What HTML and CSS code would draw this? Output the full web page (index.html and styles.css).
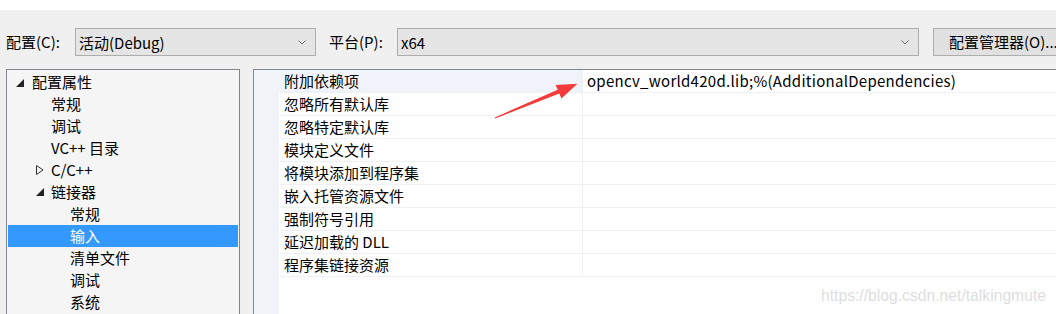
FILE: index.html
```html
<!DOCTYPE html>
<html lang="zh-CN">
<head>
    <meta charset="UTF-8">
    <title>属性页</title>
    <link rel="stylesheet" href="styles.css">
</head>
<body>
    <div class="dialog">
        <div class="toolbar">
            <span class="lbl lbl-config">配置(C):</span>
            <div class="combo combo-config">
                <span>活动(Debug)</span>
                <svg class="chev" width="8" height="5" viewBox="0 0 8 5"><path d="M0.5 0.5 L4 4 L7.5 0.5" fill="none" stroke="#6d6d6d" stroke-width="1"/></svg>
            </div>
            <span class="lbl lbl-plat">平台(P):</span>
            <div class="combo combo-plat">
                <span>x64</span>
                <svg class="chev" width="8" height="5" viewBox="0 0 8 5"><path d="M0.5 0.5 L4 4 L7.5 0.5" fill="none" stroke="#6d6d6d" stroke-width="1"/></svg>
            </div>
            <div class="btn">配置管理器(O)...</div>
        </div>

        <div class="panes">
            <div class="tree">
                <div class="node l1"><svg class="tri" width="8" height="8" viewBox="0 0 8 8"><path d="M8 0 L8 8 L0 8 Z" fill="#222"/></svg>配置属性</div>
                <div class="node l2">常规</div>
                <div class="node l2">调试</div>
                <div class="node l2">VC++ 目录</div>
                <div class="node l2 has-tri"><svg class="tri" width="8" height="10" viewBox="0 0 8 10"><path d="M0.5 0.5 L7 5 L0.5 9.5 Z" fill="none" stroke="#333" stroke-width="1"/></svg>C/C++</div>
                <div class="node l2 has-tri"><svg class="tri" width="8" height="8" viewBox="0 0 8 8"><path d="M8 0 L8 8 L0 8 Z" fill="#222"/></svg>链接器</div>
                <div class="node l3">常规</div>
                <div class="node l3 selected">输入</div>
                <div class="node l3">清单文件</div>
                <div class="node l3">调试</div>
                <div class="node l3">系统</div>
            </div>

            <div class="grid">
                <div class="gutter"></div>
                <div class="rows">
                    <div class="row active"><div class="name">附加依赖项</div><div class="value">opencv_world420d.lib;%(AdditionalDependencies)</div></div>
                    <div class="row"><div class="name">忽略所有默认库</div><div class="value"></div></div>
                    <div class="row"><div class="name">忽略特定默认库</div><div class="value"></div></div>
                    <div class="row"><div class="name">模块定义文件</div><div class="value"></div></div>
                    <div class="row"><div class="name">将模块添加到程序集</div><div class="value"></div></div>
                    <div class="row"><div class="name">嵌入托管资源文件</div><div class="value"></div></div>
                    <div class="row"><div class="name">强制符号引用</div><div class="value"></div></div>
                    <div class="row"><div class="name">延迟加载的 DLL</div><div class="value"></div></div>
                    <div class="row"><div class="name">程序集链接资源</div><div class="value"></div></div>
                </div>
            </div>
        </div>
    </div>

    <svg class="arrow" width="1056" height="314" viewBox="0 0 1056 314">
        <polygon points="495.2,118.6 559.3,93.6 561.4,98.4 577.5,83.8 555.6,85 557.7,89.8 494.8,117.4" fill="#f23c3c"/>
    </svg>
    <div class="watermark">https://blog.csdn.net/talkingmute</div>
</body>
</html>
```

FILE: styles.css
```css
body{
    margin: 0;
    width: 1056px;
    height: 314px;
    overflow: hidden;
    background: #fff;
    position: relative;
    font-family: "Noto Sans CJK SC", sans-serif;
    font-size: 15px;
    color: #000;
}

.dialog{
    margin-top: 10px;
    height: 304px;
    background: #f0f0f0;
    overflow: hidden;
}

/* 상단 콤보 영역 */
.toolbar{
    display: flex;
    align-items: center;
    padding-top: 18px;
    height: 28px;
    white-space: nowrap;
}
.toolbar > *{
    flex-shrink: 0;
}
.lbl{
    line-height: 28px;
    box-sizing: border-box;
}
.lbl-config{
    width: 75px;
    padding-left: 6px;
}
.lbl-plat{
    width: 68px;
    margin-left: 13px;
}
.combo{
    box-sizing: border-box;
    height: 28px;
    border: 1px solid #adadad;
    background: #e5e5e5;
    display: flex;
    align-items: center;
    justify-content: space-between;
    padding: 0 9px 0 3px;
}
.combo-config{
    width: 241px;
}
.combo-plat{
    width: 522px;
}
.chev{
    display: block;
}
.btn{
    box-sizing: border-box;
    height: 28px;
    width: 132px;
    margin-left: 14px;
    border: 1px solid #adadad;
    background: #e1e1e1;
    line-height: 26px;
    padding-left: 15px;
}

.panes{
    display: flex;
    margin-top: 13px;
    height: 245px;
}
.panes > div{
    flex-shrink: 0;
}

/* 트리 */
.tree{
    box-sizing: border-box;
    width: 234px;
    margin-left: 6px;
    height: 260px;
    border: 1px solid #828790;
    background: #f5f5f5;
    padding: 1px;
}
.node{
    height: 22px;
    line-height: 22px;
    display: flex;
    align-items: center;
    white-space: nowrap;
}
.node.l1{
    padding-left: 8px;
}
.node.l1 .tri{
    margin-right: 8px;
    margin-top: 2px;
}
.node.l2{
    padding-left: 43px;
}
.node.l2.has-tri{
    padding-left: 28px;
}
.node.has-tri .tri{
    margin-right: 7px;
}
.node.l3{
    padding-left: 62px;
}
.node.selected{
    background: #3399ff;
    color: #fff;
}

/* 속성 그리드 */
.grid{
    box-sizing: border-box;
    width: 820px;
    margin-left: 13px;
    height: 260px;
    border: 1px solid #828790;
    border-right: none;
    background: #fff;
    display: flex;
}
.gutter{
    width: 25px;
    background: #f0f4f9;
}
.rows{
    flex: 1;
}
.row{
    display: flex;
    height: 22px;
    border-bottom: 1px solid #eef0f4;
}
.row .name{
    width: 298px;
    padding-left: 5px;
    line-height: 22px;
    border-right: 1px solid #eef0f4;
    white-space: nowrap;
}
.row .value{
    flex: 1;
    padding-left: 4px;
    line-height: 22px;
    letter-spacing: 0.28px;
    white-space: nowrap;
}
.row.active .name{
    background: #f0f4fa;
}

.arrow{
    position: absolute;
    left: 0;
    top: 0;
    pointer-events: none;
}
.watermark{
    position: absolute;
    left: 821px;
    top: 287px;
    font-family: "Liberation Sans", Arial, sans-serif;
    font-size: 15.7px;
    color: #dedede;
    white-space: nowrap;
}
```
